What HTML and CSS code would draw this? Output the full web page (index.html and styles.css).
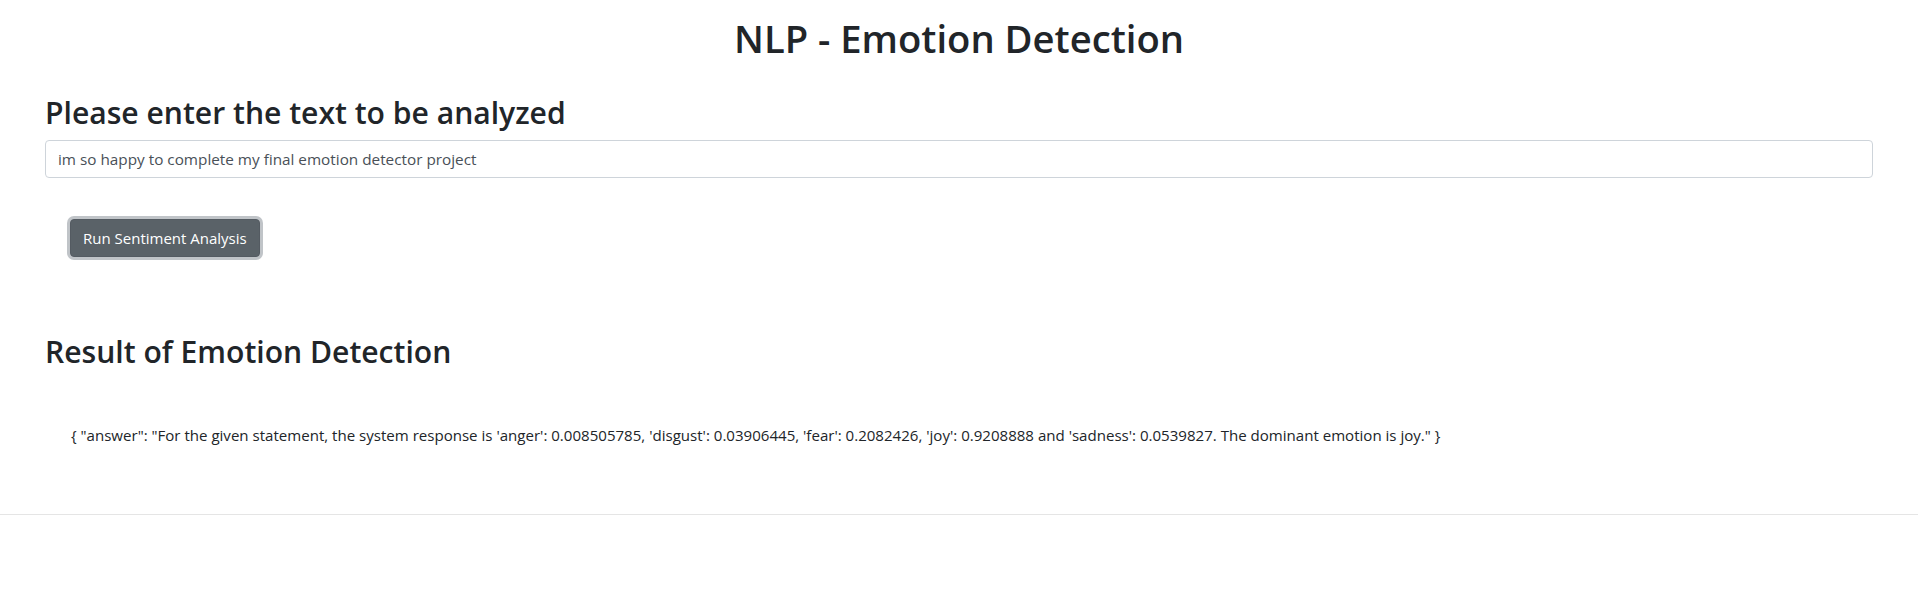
FILE: index.html
```html
<!DOCTYPE html>
<html lang="en">
<head>
<meta charset="utf-8">
<title>NLP - Emotion Detection</title>
<link rel="stylesheet" href="styles.css">
</head>
<body>
<h1 class="page-title">NLP - Emotion Detection</h1>
<main class="container">
  <h2 class="section-title">Please enter the text to be analyzed</h2>
  <input class="text-input" type="text" value="im so happy to complete my final emotion detector project">
  <div class="actions">
    <button class="btn-run" type="button">Run Sentiment Analysis</button>
  </div>
  <h2 class="section-title result-title">Result of Emotion Detection</h2>
  <div class="result-text">{ "answer": "For the given statement, the system response is 'anger': 0.008505785, 'disgust': 0.03906445, 'fear': 0.2082426, 'joy': 0.9208888 and 'sadness': 0.0539827. The dominant emotion is joy." }</div>
</main>
<hr class="divider">
</body>
</html>
```

FILE: styles.css
```css
* { box-sizing: border-box; }

body {
  margin: 0;
  font-family: "Open Sans", "Noto Sans", sans-serif;
  color: #212529;
  background: #fff;
  font-size: 15px;
  line-height: 24px;
}

.page-title {
  margin: 14px 0 0;
  font-size: 38.2px;
  line-height: 48px;
  font-weight: 600;
  text-align: center;
}

.container {
  padding: 0 45px 0 45px;
}

.section-title {
  margin: 32px 0 8px;
  font-size: 30.1px;
  line-height: 38px;
  font-weight: 600;
}

.text-input {
  display: block;
  width: 100%;
  height: 38px;
  padding: 6px 12px;
  font-family: inherit;
  font-size: 15.3px;
  color: #495057;
  border: 1px solid #ced4da;
  border-radius: 4px;
  background: #fff;
}

.actions {
  margin-top: 41px;
  padding-left: 25px;
}

.btn-run {
  height: 38px;
  padding: 6px 12px;
  font-family: inherit;
  font-size: 15px;
  line-height: 24px;
  color: #fff;
  background: #5a6268;
  border: 1px solid #545b62;
  border-radius: 4px;
  box-shadow: 0 0 0 3px rgba(130, 138, 145, 0.5);
}

.result-title {
  margin-top: 76px;
}

.result-text {
  margin-top: 52px;
  padding-left: 26px;
  font-size: 15.07px;
}

.divider {
  margin: 67px 0 0;
  border: 0;
  border-top: 1px solid rgba(0, 0, 0, 0.1);
}
```
